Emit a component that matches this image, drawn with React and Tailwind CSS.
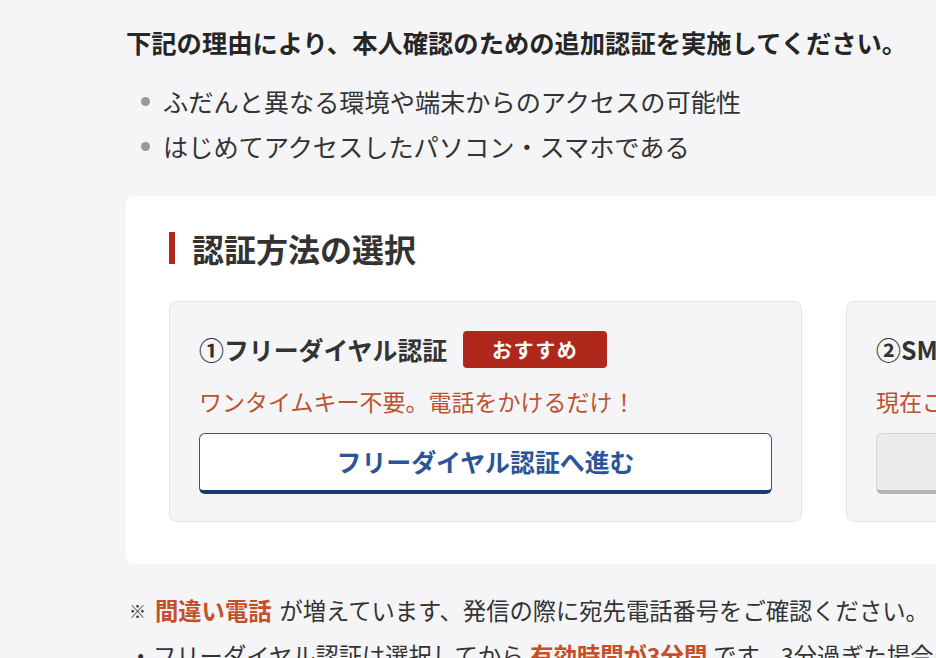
const MethodCard = ({ title, badge, note, button, disabled }) => (
    <div className="w-[633px] shrink-0 rounded-lg border border-[#e4e4e7] bg-[#f5f5f7] px-[29px] pt-[29px] pb-[27px]">
        <div className="flex h-[37px] items-center gap-4">
            <h3 className="whitespace-nowrap text-[24.9px] font-bold leading-[37px] text-[#333]">{title}</h3>
            {badge && (
                <span className="flex h-[37px] w-[144px] items-center justify-center rounded-[4px] bg-[#b0281c] text-[20px] font-bold tracking-[0.08em] text-white">
                    {badge}
                </span>
            )}
        </div>
        <p className="mt-4 whitespace-nowrap text-[23px] leading-[34px] text-[#bc532f]">{note}</p>
        {disabled ? (
            <div className="mt-[15px] h-[61px] w-full rounded-md border border-b-4 border-[#d4d4d6] border-b-[#b4b4b6] bg-[#ebebed]" />
        ) : (
            <button className="mt-[15px] flex h-[61px] w-full items-center justify-center rounded-md border border-b-4 border-[#2a568f] border-b-[#163c73] bg-white text-[24.9px] font-bold text-[#2b5597]">
                {button}
            </button>
        )}
    </div>
);

export default function App() {
    return (
        <div
            className="h-[658px] w-[936px] overflow-hidden bg-[#f5f5f7] pl-[126px] pt-[22px] text-[#333]"
            style={{ fontFamily: '"Noto Sans CJK JP", "Noto Sans", sans-serif' }}
        >
            {/* Reasons */}
            <p className="whitespace-nowrap text-[25.3px] font-bold leading-[40px] text-[#262626]">
                下記の理由により、本人確認のための追加認証を実施してください。
            </p>
            <ul className="mt-[16.5px]">
                {['ふだんと異なる環境や端末からのアクセスの可能性', 'はじめてアクセスしたパソコン・スマホである'].map((t) => (
                    <li key={t} className="flex items-center whitespace-nowrap text-[25.2px] leading-[45px]">
                        <span className="ml-[15px] mr-[13px] h-[9px] w-[9px] rounded-full bg-[#9a9a9c]" />
                        {t}
                    </li>
                ))}
            </ul>

            {/* Method selection */}
            <section className="mt-[27.5px] w-[1400px] rounded-lg bg-white pl-[43px] pt-9 pb-[42px]">
                <h2 className="flex h-[32px] items-center border-l-[6px] border-[#b0281c] pl-[17px] text-[32px] font-bold leading-[32px] text-[#333]">
                    認証方法の選択
                </h2>
                <div className="mt-[37px] flex gap-[44px]">
                    <MethodCard
                        title="①フリーダイヤル認証"
                        badge="おすすめ"
                        note="ワンタイムキー不要。電話をかけるだけ！"
                        button="フリーダイヤル認証へ進む"
                    />
                    <MethodCard title="②SMS認証" note="現在ご利用いただけません" disabled />
                </div>
            </section>

            {/* Notes */}
            <div className="mt-[23.5px] pl-[3px] text-[23.3px] leading-[45px]">
                <p className="flex items-center whitespace-nowrap">
                    <span className="mr-[9px] text-[17px] font-bold">※</span>
                    <span className="mr-[8px] font-bold text-[#c4502a]">間違い電話</span>
                    が増えています、発信の際に宛先電話番号をご確認ください。
                </p>
                <p className="flex items-center whitespace-nowrap">
                    <span className="mr-[8px] inline-block w-[16px] text-center">・</span>
                    フリーダイヤル認証は選択してから
                    <span className="mx-[6px] font-bold text-[#c4502a]">有効時間が3分間</span>
                    です。3分過ぎた場合は、再度選択してください。
                </p>
            </div>
        </div>
    );
}
